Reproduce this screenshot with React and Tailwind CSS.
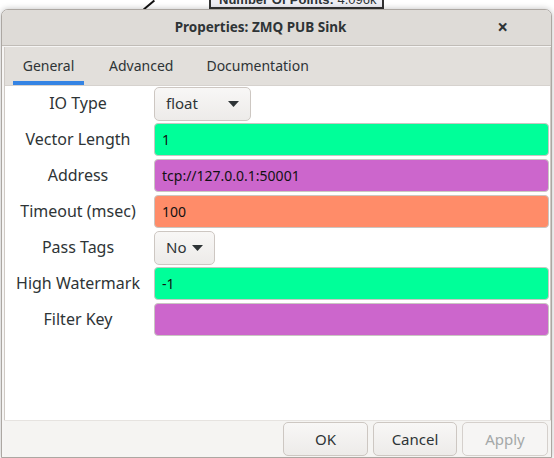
import React from 'react';

const rows = [
  { label: 'IO Type', kind: 'combo', value: 'float', width: 'w-[97px]' },
  { label: 'Vector Length', kind: 'field', value: '1', color: 'bg-[#00ff99]' },
  { label: 'Address', kind: 'field', value: 'tcp://127.0.0.1:50001', color: 'bg-[#cc66cc]' },
  { label: 'Timeout (msec)', kind: 'field', value: '100', color: 'bg-[#ff8c69]' },
  { label: 'Pass Tags', kind: 'combo', value: 'No', width: 'w-[61px]' },
  { label: 'High Watermark', kind: 'field', value: '-1', color: 'bg-[#00ff99]' },
  { label: 'Filter Key', kind: 'field', value: '', color: 'bg-[#cc66cc]' },
];

const Arrow = () => (
  <svg width="11" height="6" viewBox="0 0 11 6" className="shrink-0">
    <path d="M0 0 L11 0 L5.5 6 Z" fill="#2e3436" />
  </svg>
);

const App = () => {
  return (
    <div
      className="relative w-[554px] h-[458px] overflow-hidden bg-white text-[#2e3436]"
      style={{ fontFamily: '"Noto Sans", "Open Sans", sans-serif' }}
    >
      {/* what shows of the window behind */}
      <div className="absolute left-[148px] top-[-2px] w-[2px] h-[14px] bg-[#111] rotate-[50deg]" />
      <div
        className="absolute left-[209px] top-[-9px] w-[175px] h-[18px] bg-[#eeeef4] border-2 border-[#333] text-[13px] leading-[14px] pl-[8px] whitespace-nowrap overflow-hidden"
        style={{ fontFamily: '"Liberation Sans", Arial, sans-serif' }}
      >
        <span className="font-bold">Number Of Points:</span> 4.096k
      </div>

      <div className="h-[9px]" />

      {/* dialog */}
      <div className="relative ml-[1px] mr-[2px] h-[449px] flex flex-col rounded-t-[7px] border border-[#aca7a2] bg-[#f6f5f4] shadow-[0_0_6px_rgba(0,0,0,0.25)] overflow-hidden">
        <div className="h-[36px] shrink-0 flex items-center justify-center relative bg-[#dedbd7] border-b border-[#c0bcb7] pr-[32px]">
          <span className="text-[13.5px] font-bold text-[#2e3436]">Properties: ZMQ PUB Sink</span>
          <span className="absolute right-[43px] top-[8px] text-[19px] leading-[19px] font-bold text-[#2e3436]">×</span>
        </div>

        <div className="flex-1 flex flex-col pl-[2px] pt-[1px] bg-[#f6f5f4]">
          <div className="flex-1 flex flex-col border-l border-r border-[#cfcac5]">
            {/* tabs */}
            <div className="h-[39px] shrink-0 flex items-end bg-[#e2dfdb] border-b border-[#d6d2ce] pl-[8px] text-[14px]">
              <div className="w-[71px] h-[39px] flex flex-col justify-end">
                <div className="flex-1 flex items-center justify-center text-[#2e3436] pt-[3px]">General</div>
                <div className="h-[4px] bg-[#3584e4]" />
              </div>
              <div className="h-[39px] flex items-center pl-[25px] pr-[33px] text-[#2e3436] pb-[1px]">Advanced</div>
              <div className="h-[39px] flex items-center text-[#2e3436] pb-[1px]">Documentation</div>
            </div>

            {/* parameters */}
            <div className="flex-1 bg-white flex flex-col gap-[3px] pt-[1px] pr-[1px]">
              {rows.map((r) => (
                <div key={r.label} className="h-[33px] flex items-center">
                  <div className="w-[149px] shrink-0 pr-[3px] text-center text-[16px] text-[#2e3436] pb-[1px] whitespace-nowrap">{r.label}</div>
                  {r.kind === 'combo' ? (
                    <div className={`${r.width} h-[34px] flex items-center justify-between pl-[11px] pr-[11px] rounded-[5px] border border-[#cdc7c2] bg-gradient-to-b from-[#f8f7f6] to-[#edebe9] text-[15px] text-[#2e3436]`}>
                      <span className="pb-[1px]">{r.value}</span>
                      <Arrow />
                    </div>
                  ) : (
                    <div className={`flex-1 h-[33px] flex items-center pl-[7px] rounded-[4px] border border-[#c9c6c2] text-[14px] text-[#111] ${r.color}`}>
                      {r.value}
                    </div>
                  )}
                </div>
              ))}
            </div>
          </div>

          {/* buttons */}
          <div className="h-[37px] shrink-0 flex items-center justify-end gap-[5px] pr-[3px] bg-[#f5f4f2] border-t border-[#e6e3e0]">
            <button className="w-[85px] h-[34px] rounded-[5px] border border-[#cdc7c2] bg-gradient-to-b from-[#f8f7f6] to-[#edebe9] text-[15px] text-[#2e3436]">OK</button>
            <button className="w-[84px] h-[34px] rounded-[5px] border border-[#cdc7c2] bg-gradient-to-b from-[#f8f7f6] to-[#edebe9] text-[15px] text-[#2e3436]">Cancel</button>
            <button className="w-[86px] h-[34px] rounded-[5px] border border-[#d5d0cc] bg-[#f6f5f4] text-[15px] text-[#a4a8a8]">Apply</button>
          </div>
        </div>
      </div>
    </div>
  );
};

export default App;
